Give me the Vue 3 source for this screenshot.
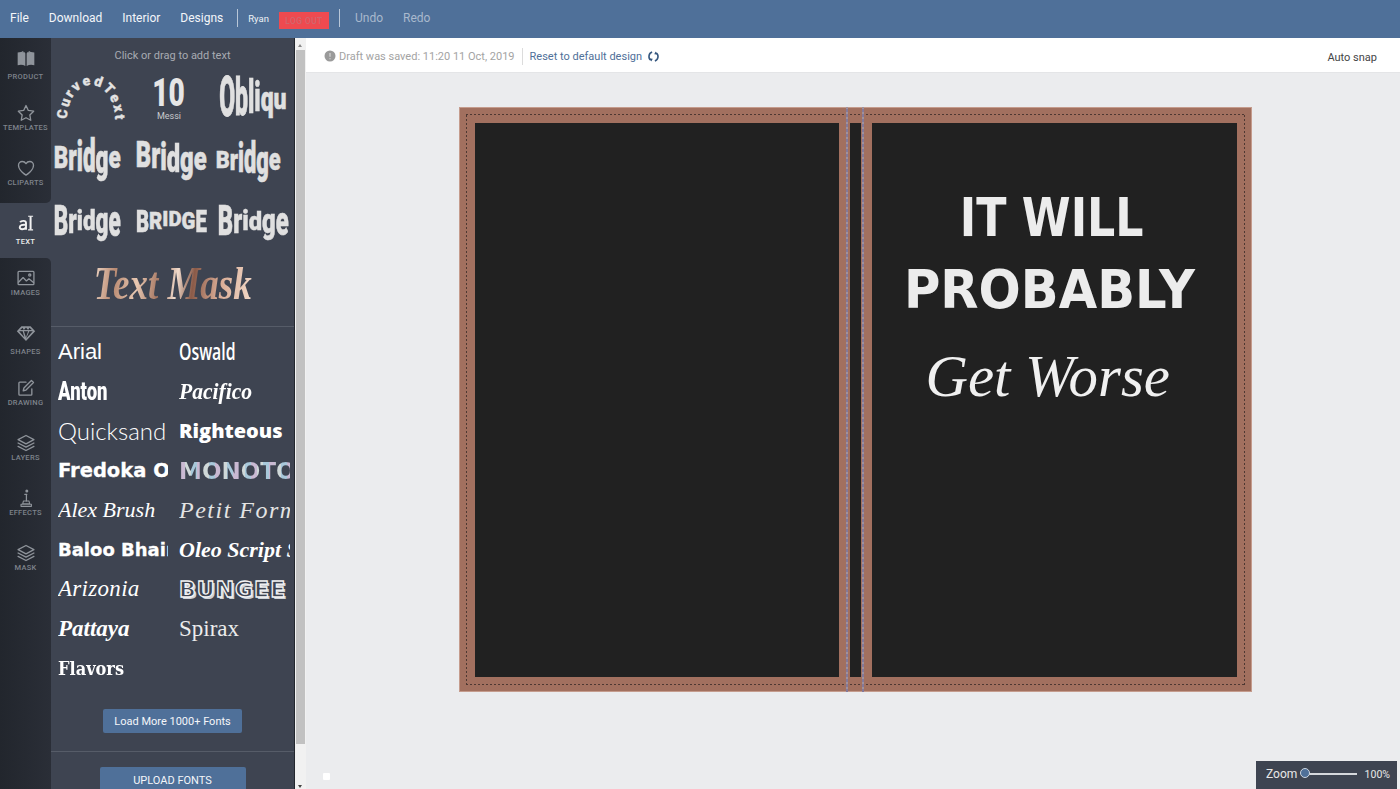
<script setup>
const navLeft = ['File', 'Download', 'Interior', 'Designs']

const railItems = [
  { label: 'PRODUCT', icon: 'book', low: true },
  { label: 'TEMPLATES', icon: 'star' },
  { label: 'CLIPARTS', icon: 'heart' },
  { label: 'TEXT', icon: 'text', active: true, low: true },
  { label: 'IMAGES', icon: 'image' },
  { label: 'SHAPES', icon: 'diamond', low: true },
  { label: 'DRAWING', icon: 'edit' },
  { label: 'LAYERS', icon: 'layers' },
  { label: 'EFFECTS', icon: 'effects' },
  { label: 'MASK', icon: 'layers' }
]
const activeIndex = railItems.findIndex((i) => i.active)

const warps = [
  { text: 'Bridge', cls: 'w-a', sy: [0.95, 1.12, 1.3, 1.38, 1.26, 0.95], dy: [-1, -1, -2, -2, 0, -1] },
  { text: 'Bridge', cls: 'w-b', sy: [1.12, 1.1, 1.16, 1.2, 1.12, 1.0], dy: [-4, -3, -2, 0, 1, 0] },
  { text: 'Bridge', cls: 'w-c', sy: [0.7, 0.9, 1.25, 1.32, 1.25, 0.95], dy: [1, 1, -1, -1, 1, 1] },
  { text: 'Bridge', cls: 'w-d', sy: [1.3, 1.05, 0.85, 0.82, 1.1, 1.32], dy: [0, 0, 0, 0, 0, 0] },
  { text: 'BRIDGE', cls: 'w-e', sy: [1.2, 0.95, 0.8, 0.8, 0.95, 1.2], dy: [0, -1, -2, -2, -1, 0] },
  { text: 'Bridge', cls: 'w-f', sy: [1.3, 1.05, 0.82, 0.8, 1.05, 1.25], dy: [0, 0, 0, 0, 0, 0] }
]
const firstRow = warps.slice(0, 3)
const secondRow = warps.slice(3)
const oblique = { text: 'Obliqu', sy: [1.75, 1.62, 1.42, 1.26, 1.08, 0.92], dy: [0, 0, 0, 0, 2, 2] }

function letters(word) {
  return word.text.split('').map((ch, i) => ({
    ch,
    style: { transform: `translateY(${word.dy[i]}px) scaleY(${word.sy[i]})` }
  }))
}

const fonts = [
  { name: 'Arial', cls: 'f-arial' },
  { name: 'Oswald', cls: 'f-oswald' },
  { name: 'Anton', cls: 'f-anton' },
  { name: 'Pacifico', cls: 'f-pacifico' },
  { name: 'Quicksand', cls: 'f-quicksand' },
  { name: 'Righteous', cls: 'f-righteous' },
  { name: 'Fredoka One', cls: 'f-fredoka' },
  { name: 'MONOTON', cls: 'f-monoton' },
  { name: 'Alex Brush', cls: 'f-alex' },
  { name: 'Petit Formal Script', cls: 'f-petit' },
  { name: 'Baloo Bhaina', cls: 'f-baloo' },
  { name: 'Oleo Script Swash', cls: 'f-oleo' },
  { name: 'Arizonia', cls: 'f-arizonia' },
  { name: 'BUNGEE', cls: 'f-bungee' },
  { name: 'Pattaya', cls: 'f-pattaya' },
  { name: 'Spirax', cls: 'f-spirax' },
  { name: 'Flavors', cls: 'f-flavors' }
]
</script>

<template>
  <div class="app">
    <header class="topbar">
      <nav class="nav">
        <span v-for="n in navLeft" :key="n" class="nav-item">{{ n }}</span>
      </nav>
      <span class="bar-sep sep-a"></span>
      <span class="user">Ryan</span>
      <span class="logout">LOG OUT</span>
      <span class="bar-sep sep-b"></span>
      <span class="nav-item dim undo">Undo</span>
      <span class="nav-item dim redo">Redo</span>
    </header>

    <div class="workspace">
      <aside class="rail">
        <div
          v-for="(item, i) in railItems"
          :key="item.label"
          class="rail-item"
          :class="{ active: item.active, low: item.low, before: i === activeIndex - 1, after: i === activeIndex + 1 }"
        >
          <svg class="rail-icon" viewBox="0 0 24 24" width="20" height="20" fill="none" stroke="currentColor" stroke-width="1.6" stroke-linejoin="round" stroke-linecap="round">
            <template v-if="item.icon === 'book'">
              <path fill="currentColor" stroke="none" d="M2 5.500c3-1 6.500-1 9.200.8v15.200c-2.700-1.700-6.200-1.800-9.200-.8zM22 5.500c-3-1-6.500-1-9.200.8v15.200c2.700-1.700 6.200-1.800 9.200-.8z" />
              <path fill="currentColor" stroke="none" d="M7 3.500l3.500 1.500v1L7 4.800zM17 3.500l-3.500 1.500v1L17 4.800z" />
            </template>
            <path v-else-if="item.icon === 'star'" d="M12 3l2.800 5.900 6.400.9-4.600 4.500 1.100 6.400L12 17.700l-5.700 3 1.100-6.400L2.800 9.800l6.400-.9z" />
            <path v-else-if="item.icon === 'heart'" d="M12 20.500S3 15 3 8.800C3 6 5.200 4.200 7.500 4.200c2 0 3.500 1 4.500 2.600 1-1.600 2.500-2.600 4.500-2.600C18.800 4.200 21 6 21 8.800c0 6.200-9 11.700-9 11.700z" />
            <template v-else-if="item.icon === 'text'">
              <path stroke-width="2.300" stroke-linecap="butt" d="M5 11.200c1.200-2.200 7-2.600 7 .8v8M12 14.200c-4.500-.6-7.500.4-7.500 3 0 3 5.200 3 7.500 0" />
              <path stroke-width="2.400" stroke-linecap="butt" d="M17.500 4v16" />
              <path stroke-width="1.300" stroke-linecap="butt" d="M14.500 3.800h6M14.500 20.200h6" />
            </template>
            <template v-else-if="item.icon === 'image'">
              <rect x="2.500" y="4" width="19" height="16" rx="1" />
              <path d="M3 17l5.500-5.500 4 4 3-2.500 5.500 4.500" />
              <circle cx="16.500" cy="8.500" r="1.300" />
            </template>
            <path v-else-if="item.icon === 'diamond'" fill="currentColor" stroke="none" d="M6.500 4h11L23 10 12 21.500 1 10zM8 10H3.800l6.200 7zM16 10l-4 9 8.200-9zM9.500 10L12 17l2.500-7zM9.500 8.500h5L12 5.500zM7.800 5.800L5 8.500h4.500zM16.200 5.800l-1.700 2.700H19z" fill-rule="evenodd" />
            <template v-else-if="item.icon === 'edit'">
              <path d="M19 13v6.500a1 1 0 0 1-1 1H4.500a1 1 0 0 1-1-1V6a1 1 0 0 1 1-1H12" />
              <path d="M18.500 3l2.500 2.500L12 14.500l-3.300.8.800-3.300z" />
            </template>
            <template v-else-if="item.icon === 'layers'">
              <path d="M12 3l9.500 5-9.500 5-9.500-5z" />
              <path d="M2.500 12l9.500 5 9.500-5" />
              <path d="M2.500 16l9.500 5 9.500-5" />
            </template>
            <template v-else>
              <circle cx="13" cy="3.500" r="1.800" fill="currentColor" stroke="none" />
              <path stroke-width="1.500" d="M13 7.500h-2.500M12.500 7.500v8" />
              <path fill="none" stroke-width="1.300" d="M9 15.500h6.500l1 3.500H8zM6 19.500h12.500V22H6z" />
            </template>
          </svg>
          <span class="rail-label">{{ item.label }}</span>
        </div>
        <div class="rail-fill"></div>
      </aside>

      <section class="panel">
        <p class="hint">Click or drag to add text</p>
        <div class="presets">
          <div class="preset">
            <svg class="curved" viewBox="0 0 76 56" width="76" height="56">
              <defs><path id="arc" d="M13 50 A24 34 0 0 1 61 50" fill="none" /></defs>
              <text class="curved-text"><textPath href="#arc" textLength="92">CurvedText</textPath></text>
            </svg>
          </div>
          <div class="preset messi">
            <span class="ten">10</span>
            <span class="messi-name">Messi</span>
          </div>
          <div class="preset">
            <span class="warp oblique">
              <span v-for="(l, i) in letters(oblique)" :key="i" class="ltr" :style="l.style">{{ l.ch }}</span>
            </span>
          </div>
          <div v-for="(w, wi) in firstRow" :key="'a' + wi" class="preset">
            <span class="warp" :class="w.cls">
              <span v-for="(l, i) in letters(w)" :key="i" class="ltr" :style="l.style">{{ l.ch }}</span>
            </span>
          </div>
          <div v-for="(w, wi) in secondRow" :key="'b' + wi" class="preset">
            <span class="warp" :class="w.cls">
              <span v-for="(l, i) in letters(w)" :key="i" class="ltr" :style="l.style">{{ l.ch }}</span>
            </span>
          </div>
          <div class="preset mask-row"><span class="text-mask">Text Mask</span></div>
        </div>
        <div class="divider first"></div>
        <div class="font-grid">
          <div v-for="f in fonts" :key="f.name" class="font-cell"><span :class="f.cls">{{ f.name }}</span></div>
        </div>
        <div class="center load-wrap"><button class="btn load">Load More 1000+ Fonts</button></div>
        <div class="divider"></div>
        <div class="center upload-wrap"><button class="btn upload">UPLOAD FONTS</button></div>
      </section>

      <div class="scrollbar">
        <span class="arrow up"></span>
        <span class="thumb"></span>
        <span class="arrow down"></span>
      </div>

      <main class="main">
        <div class="subbar">
          <svg class="info" viewBox="0 0 12 12" width="12" height="12">
            <circle cx="6" cy="6" r="5.500" fill="#9a9a9a" />
            <path d="M6 3v3.800M6 8.300v1" stroke="#d8d8d8" stroke-width="1.200" />
          </svg>
          <span class="draft">Draft was saved: 11:20 11 Oct, 2019</span>
          <span class="sub-sep"></span>
          <span class="reset">Reset to default design</span>
          <svg class="refresh" viewBox="0 0 14 14" width="13" height="13" fill="none" stroke="#35577f" stroke-width="1.700">
            <path d="M5.500 2.200A5 5 0 0 0 4.200 11" />
            <path d="M8.500 11.800A5 5 0 0 0 9.800 3" />
            <path fill="#35577f" stroke="none" d="M3.200 9.200l3 .3-1.500 3zM10.800 4.800l-3-.3 1.500-3z" />
          </svg>
          <span class="snap">Auto snap</span>
        </div>
        <div class="stage">
          <div class="book">
            <div class="cover-panel left"></div>
            <div class="cover-panel spine"></div>
            <div class="cover-panel right">
              <div class="line-1">IT WILL</div>
              <div class="line-2">PROBABLY</div>
              <div class="line-3">Get Worse</div>
            </div>
            <span class="stitch"></span>
            <span class="fold fold-a"></span>
            <span class="fold fold-b"></span>
          </div>
          <span class="handle"></span>
          <div class="zoom">
            <span class="zoom-label">Zoom</span>
            <span class="slider"><span class="knob"></span></span>
            <span class="zoom-val">100%</span>
          </div>
        </div>
      </main>
    </div>
  </div>
</template>

<style>
html, body { margin: 0; height: 100%; overflow: hidden; }
</style>

<style scoped>
.app {
  width: 1400px;
  height: 789px;
  display: flex;
  flex-direction: column;
  overflow: hidden;
  font-family: Roboto, "Liberation Sans", sans-serif;
  background: #ebecee;
}

/* top bar */
.topbar {
  height: 38px;
  flex: none;
  display: flex;
  align-items: center;
  padding-left: 10px;
  padding-bottom: 2px;
  background: #4f7099;
  color: #fff;
  box-sizing: border-box;
}
.nav { display: flex; gap: 20px; }
.nav-item { font-size: 12px; color: #f4f6f9; }
.nav-item.dim { color: #a9b9cd; }
.bar-sep { width: 1px; height: 18px; background: #b9c7d8; }
.sep-a { margin-left: 14px; }
.user { margin-left: 10px; font-size: 9.500px; color: #eef2f6; }
.logout {
  margin-left: 10px;
  width: 50px;
  height: 17px;
  margin-top: 5px;
  background: #ee4a50;
  color: #d0666e;
  font-size: 8.500px;
  font-weight: 500;
  letter-spacing: .4px;
  display: flex;
  align-items: center;
  justify-content: center;
}
.sep-b { margin-left: 10px; }
.undo { margin-left: 15px; }
.redo { margin-left: 20px; }

.workspace { flex: 1; min-height: 0; display: flex; }

/* left rail */
.rail {
  width: 51px;
  flex: none;
  display: flex;
  flex-direction: column;
  background: #3e4451;
}
.rail-item {
  height: 55px;
  flex: none;
  display: flex;
  flex-direction: column;
  align-items: center;
  padding-top: 10px;
  box-sizing: border-box;
  background: linear-gradient(90deg, #22262d, #2a2e37);
  color: #8f949b;
}
.rail-item.active { background: #3e4451; color: #f2f2f2; }
.rail-item.before { border-bottom-right-radius: 5px; }
.rail-item.after { border-top-right-radius: 5px; }
.rail-icon { display: block; }
.rail-label { font-size: 7.500px; font-weight: 500; letter-spacing: .3px; line-height: 10px; color: #7e838b; }
.rail-item.low .rail-label { margin-top: 4px; }
.rail-item.active .rail-label { color: #eceded; }
.rail-fill { flex: 1; background: linear-gradient(90deg, #22262d, #2a2e37); }

/* panel */
.panel {
  width: 244px;
  flex: none;
  box-sizing: border-box;
  background: #3e4451;
  border-right: 1px solid #23272e;
  overflow: hidden;
}
.hint {
  margin: 0;
  height: 28px;
  padding-top: 11px;
  box-sizing: border-box;
  text-align: center;
  font-size: 11px;
  line-height: 14px;
  color: #a8abb1;
}
.presets {
  display: grid;
  grid-template-columns: repeat(3, 81px);
  grid-auto-rows: 62px;
  color: #e6e6e6;
}
.preset {
  display: flex;
  align-items: center;
  justify-content: center;
  overflow: hidden;
  min-width: 0;
}
.curved { display: block; overflow: visible; }
.curved-text {
  font-family: Roboto, sans-serif;
  font-weight: 900;
  font-size: 14px;
  fill: #e2e2e2;
  stroke: #e2e2e2;
  stroke-width: .3px;
}
.messi { flex-direction: column; padding-right: 7px; box-sizing: border-box; }
.ten {
  font-weight: 900;
  font-size: 39px;
  line-height: 34px;
  transform: translateY(3px) scaleX(.72);
  color: #e6e6e6;
}
.messi-name { font-size: 9px; line-height: 12px; margin-top: 3px; color: #c9cacd; }
.warp {
  display: inline-flex;
  align-items: center;
  font-weight: 900;
  white-space: nowrap;
  color: #e0e0e0;
  font-size: 33px;
  line-height: 38px;
  -webkit-text-stroke: .5px #e0e0e0;
}
.ltr { display: inline-block; transform-origin: center; }
.w-a { transform: translateX(-4px) scaleX(.68); }
.w-b { transform: translateX(-1px) scaleX(.72); }
.w-c { transform: translateX(-5px) scaleX(.66); }
.w-d { transform: translateX(-4px) scaleX(.68); }
.w-e { transform: translateX(-1px) scaleX(.78); font-size: 26px; }
.w-f { transform: scaleX(.72); }
.oblique { transform: translateX(-1px) scaleX(.72); font-size: 32px; }
.mask-row { grid-column: 1 / -1; padding-top: 2px; }
.text-mask {
  font-family: "Liberation Serif", serif;
  font-style: italic;
  font-weight: 700;
  font-size: 43px;
  line-height: 50px;
  white-space: nowrap;
  transform: scale(.86, 1.06);
  background: linear-gradient(100deg, #f3dccb 0%, #b88a72 14%, #e8c8b2 28%, #a3745f 42%, #f1dccd 52%, #8a5a48 62%, #d9ab94 78%, #f3dccb 100%);
  -webkit-background-clip: text;
  background-clip: text;
  color: transparent;
}
.divider { height: 1px; background: #565c68; }
.divider.first { margin-top: 12px; }
.font-grid {
  display: grid;
  grid-template-columns: 110px 111px;
  column-gap: 11px;
  grid-auto-rows: 39.600px;
  padding-top: 5px;
  padding-left: 7px;
  color: #fff;
}
.font-cell {
  display: flex;
  align-items: center;
  overflow: hidden;
  white-space: nowrap;
}
.font-cell span { display: inline-block; transform-origin: left center; }
.f-arial { font-family: "Liberation Sans", sans-serif; font-size: 22px; }
.f-oswald { font-family: "Open Sans", sans-serif; font-size: 24px; font-weight: 600; transform: translateY(-1px) scaleX(.66); }
.f-anton { font-weight: 900; font-size: 25px; transform: scaleX(.74); }
.f-pacifico { font-family: "Liberation Serif", serif; font-style: italic; font-weight: 700; font-size: 24px; transform: scaleX(.9); }
.f-quicksand { font-family: Lato, sans-serif; font-weight: 300; font-size: 24px; }
.f-righteous { font-family: "Open Sans", sans-serif; font-weight: 800; font-size: 20px; }
.f-fredoka { font-family: "DejaVu Sans", sans-serif; font-weight: 700; font-size: 19.500px; -webkit-text-stroke: .3px #fff; }
.f-monoton {
  font-family: "DejaVu Sans", sans-serif;
  font-weight: 700;
  font-size: 23px;
  background: repeating-linear-gradient(90deg, #c9b9d2 0 6px, #cfd8d8 6px 12px, #a8c8da 12px 18px);
  -webkit-background-clip: text;
  background-clip: text;
  color: transparent;
}
.f-alex { font-family: "Liberation Serif", serif; font-style: italic; font-size: 22px; }
.f-petit { font-family: "Liberation Serif", serif; font-style: italic; font-size: 24px; letter-spacing: 1.500px; font-weight: 400; color: #e4e4e4; }
.f-baloo { font-family: "DejaVu Sans", sans-serif; font-weight: 700; font-size: 18px; -webkit-text-stroke: .3px #fff; }
.f-oleo { font-family: "Liberation Serif", serif; font-style: italic; font-weight: 700; font-size: 22px; }
.f-arizonia { font-family: "Liberation Serif", serif; font-style: italic; font-size: 23px; letter-spacing: .3px; }
.f-bungee {
  font-family: "DejaVu Sans", sans-serif;
  font-weight: 700;
  font-size: 22px;
  letter-spacing: 1px;
  color: #3e4451;
  -webkit-text-stroke: 1.300px #f4f4f4;
  text-shadow: 2px 2px 0 #cfd3d8;
}
.f-pattaya { font-family: "Liberation Serif", serif; font-style: italic; font-weight: 700; font-size: 23px; }
.f-spirax { font-family: "Liberation Serif", serif; font-size: 23px; color: #ececec; }
.f-flavors { font-family: "DejaVu Serif", serif; font-weight: 700; font-size: 18px; transform: scaleX(.9); }
.center { display: flex; justify-content: center; }
.btn {
  border: 0;
  padding: 0;
  font-family: inherit;
  background: #4f7099;
  color: #f4f6f9;
  border-radius: 2px;
  font-size: 11px;
}
.load-wrap { margin-top: 21px; padding-bottom: 18px; }
.load { width: 139px; height: 24px; }
.upload-wrap { padding-top: 15px; }
.upload { width: 146px; height: 26px; }

/* scrollbar */
.scrollbar {
  width: 11px;
  flex: none;
  position: relative;
  background: #f1f1f1;
}
.thumb {
  position: absolute;
  left: 1px;
  right: 1px;
  top: 12px;
  height: 694px;
  background: #c1c1c1;
}
.arrow {
  position: absolute;
  left: 3px;
  width: 0;
  height: 0;
  border-left: 2.500px solid transparent;
  border-right: 2.500px solid transparent;
}
.arrow.up { top: 6px; border-bottom: 3px solid #8a8a8a; }
.arrow.down { bottom: 1px; border-top: 3px solid #444; }

/* main */
.main { flex: 1; min-width: 0; display: flex; flex-direction: column; }
.subbar {
  height: 35px;
  flex: none;
  display: flex;
  align-items: center;
  padding: 2px 23px 0 18px;
  box-sizing: border-box;
  background: #fff;
  border-bottom: 1px solid #e4e5e7;
  font-size: 11px;
}
.info { flex: none; }
.draft { margin-left: 3px; color: #a3a3a3; }
.sub-sep { width: 1px; height: 17px; margin: 0 7px; background: #dcdcdc; }
.reset { color: #4f7099; }
.refresh { margin-left: 5px; flex: none; }
.snap { margin-left: auto; padding-top: 3px; color: #454545; }

.stage {
  flex: 1;
  position: relative;
  background: #ebecee;
  padding: 34px 0 0 153px;
}
.book {
  width: 793px;
  height: 585px;
  box-sizing: border-box;
  padding: 16px 14px 14px 16px;
  display: flex;
  gap: 11px;
  position: relative;
  background: #a2705f;
  box-shadow: 0 0 0 1px #c59c8d inset;
}
.cover-panel { background: #212121; height: 554px; }
.left { width: 364px; }
.spine { width: 11px; }
.right {
  width: 365px;
  box-sizing: border-box;
  padding-top: 59px;
  text-align: center;
  color: #ececec;
}
.line-1, .line-2 {
  font-family: "DejaVu Sans", sans-serif;
  font-weight: 700;
  white-space: nowrap;
}
.line-1 { font-size: 54px; line-height: 72px; padding-right: 7px; transform: scaleX(.82); }
.line-2 { font-size: 54px; line-height: 72px; padding-right: 11px; transform: scaleX(.92); }
.line-3 {
  font-family: "Liberation Serif", serif;
  font-style: italic;
  font-size: 60px;
  line-height: 72px;
  margin-top: 14px;
  padding-right: 14px;
  color: #f0f0f0;
  transform: scaleX(.98);
}
.stitch {
  position: absolute;
  inset: 7px;
  pointer-events: none;
  background:
    repeating-linear-gradient(90deg, #4e3832 0 2px, transparent 2px 4px) top / 100% 1px no-repeat,
    repeating-linear-gradient(90deg, #4e3832 0 2px, transparent 2px 4px) bottom / 100% 1px no-repeat,
    repeating-linear-gradient(0deg, #4e3832 0 2px, transparent 2px 4px) left / 1px 100% no-repeat,
    repeating-linear-gradient(0deg, #4e3832 0 2px, transparent 2px 4px) right / 1px 100% no-repeat;
}
.fold {
  position: absolute;
  top: 0;
  bottom: 0;
  width: 2px;
  background: repeating-linear-gradient(0deg, #84799a 0 3px, #a0919c 3px 5px);
  pointer-events: none;
}
.fold-a { left: 387px; }
.fold-b { left: 403px; }
.handle {
  position: absolute;
  left: 17px;
  bottom: 9px;
  width: 7px;
  height: 7px;
  background: #fff;
  border-radius: 1px;
}
.zoom {
  position: absolute;
  right: 3px;
  bottom: 0;
  width: 141px;
  height: 28px;
  box-sizing: border-box;
  padding: 0 7px 2px 10px;
  display: flex;
  align-items: center;
  background: #3e4451;
  color: #e8e8e8;
  font-size: 12px;
}
.slider {
  position: relative;
  width: 54px;
  height: 2px;
  margin-left: 6px;
  background: #d6d8dc;
}
.knob {
  position: absolute;
  left: -3px;
  top: -5px;
  width: 10px;
  height: 10px;
  box-sizing: border-box;
  border-radius: 50%;
  background: #4f7099;
  border: 1px solid #cdd5df;
}
.zoom-val { margin-left: auto; font-size: 10.500px; }
</style>
